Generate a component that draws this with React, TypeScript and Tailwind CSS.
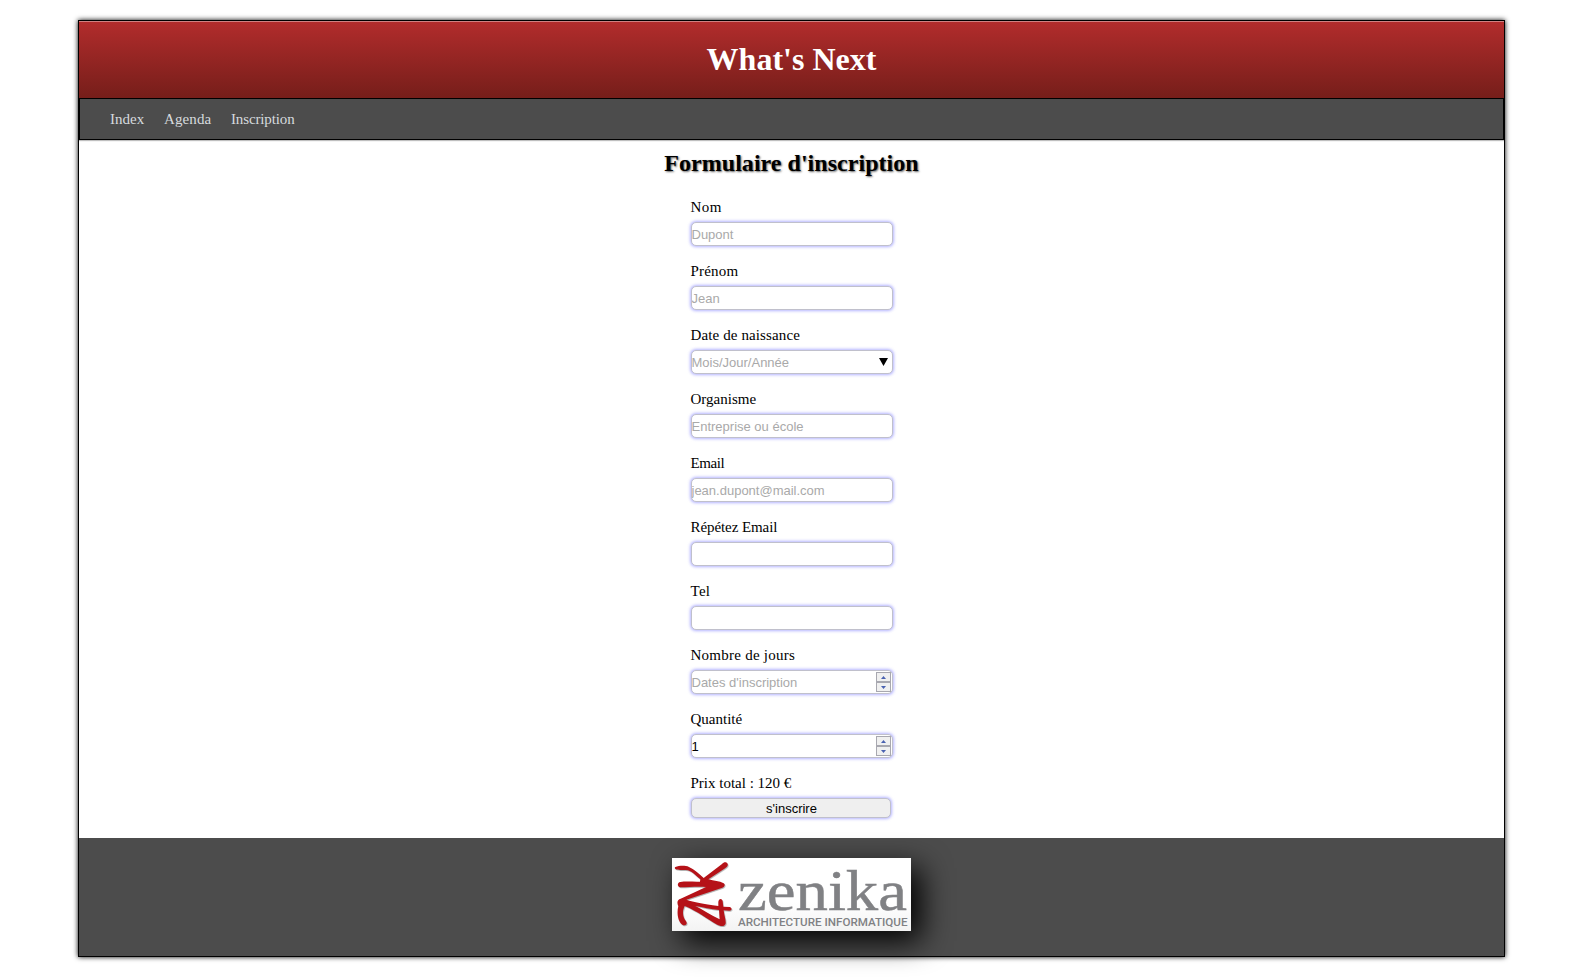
import type { ReactNode } from "react";

const glow = "border border-[#c0c0cc] shadow-[0_0_3px_1px_rgba(140,140,255,0.65)]";

function Label({ text, className }: { text: string; className: string }) {
  return (
    <label className={`block h-[22px] whitespace-nowrap text-[15px] leading-[22px] ${className}`}>{text}</label>
  );
}

function Field({
  label,
  spacing = "",
  hint = "",
  value,
  children,
}: {
  label: string;
  spacing?: string;
  hint?: string;
  value?: string;
  children?: ReactNode;
}) {
  return (
    <div className="h-16">
      <Label text={label} className={spacing} />
      <div className={`mt-1 flex h-6 w-[202px] items-center rounded-[5px] bg-white ${glow}`}>
        <input
          className="h-full min-w-0 flex-1 bg-transparent font-['Liberation_Sans',sans-serif] text-[13px] text-black outline-none placeholder:text-[#a9a9a9]"
          placeholder={hint}
          defaultValue={value}
        />
        {children}
      </div>
    </div>
  );
}

function Spinner() {
  return (
    <span className="mr-px flex h-5 w-[15px] flex-col border border-[#a8a8b0] bg-[#f0f0f0]">
      <span className="flex flex-1 items-center justify-center border-b border-[#a8a8b0]">
        <svg width="5" height="3"><path d="M2.5 0 5 3H0z" fill="#4a62b0" /></svg>
      </span>
      <span className="flex flex-1 items-center justify-center border-t border-[#a8a8b0]">
        <svg width="5" height="3"><path d="M0 0h5L2.5 3z" fill="#4a62b0" /></svg>
      </span>
    </span>
  );
}

function Logo() {
  return (
    <svg
      width="239"
      height="73"
      viewBox="0 0 239 73"
      className="block overflow-visible bg-linear-to-b from-white from-60% to-[#f3f3f3] shadow-[10px_10px_30px_#000]"
    >
      <g transform="translate(-2 -2) scale(.33333)" fill="#b51218" className="drop-shadow-[2px_3px_2px_rgba(0,0,0,0.3)]">
        <path d="M16 33C28 29 45 28 57 33C74 40 88 54 101 66L156 24C162 17 171 18 173 24C175 30 169 35 162 39L115 70C132 75 148 75 161 82C167 86 164 93 155 96L49 131C73 139 98 143 145 150L145 138C146 127 156 126 158 136L160 152L180 153C187 156 186 164 178 164L161 163C162 176 170 198 166 205C161 214 149 210 139 205C113 190 83 166 44 150C36 166 38 182 47 194C55 203 46 212 37 206C23 196 20 169 25 151C20 138 22 131 32 128L108 93C83 90 56 94 31 94C21 92 21 79 31 78C50 75 71 78 90 77L91 70C76 58 65 43 47 42C35 41 24 43 18 40C14 38 13 35 16 33ZM76 150C99 161 122 178 149 190L147 162C122 160 99 154 76 150Z" fillRule="evenodd" />
      </g>
      <text x="66" y="51.5" textLength="169" lengthAdjust="spacingAndGlyphs" className="fill-[#808184] font-['Liberation_Serif',serif] text-[58px]" stroke="#808184" strokeWidth=".5">
        zenika
      </text>
      <text x="66" y="67.5" textLength="169.5" lengthAdjust="spacingAndGlyphs" className="fill-[#808184] font-[Roboto,sans-serif] text-[11.7px] font-medium">
        ARCHITECTURE INFORMATIQUE
      </text>
    </svg>
  );
}

export default function App() {
  return (
    <div className="flex h-[977px] flex-col bg-white pt-5 pl-[78px] font-['Liberation_Serif',serif] text-black">
      <div className="flex h-[937px] w-[1427px] flex-col border border-black shadow-[0_0_5px_#000]">
        <header className="flex h-[77px] items-center justify-center border-t border-[#d08080] bg-linear-to-b from-[#b22c2c] to-[#761e1a] pb-0.5">
          <h1 className="text-[32px] leading-9 font-bold text-white">What's Next</h1>
        </header>
        <nav className="flex h-[42px] items-center border border-black bg-[#4c4c4c] pl-[30px] text-[15px] text-[#d6dade] shadow-[0_1px_1px_rgba(0,0,0,0.25)]">
          <a className="w-[54px]">Index</a>
          <a className="w-[67px] tracking-[0.1px]">Agenda</a>
          <a className="tracking-[-0.13px]">Inscription</a>
        </nav>
        <main className="flex flex-1 flex-col items-center">
          <h2 className="mt-2 h-[30px] text-2xl leading-[30px] font-bold tracking-[0.03px] [text-shadow:1px_1px_2px_#666]">Formulaire d'inscription</h2>
          <form className="mt-[18px] w-[202px]">
            <Field label="Nom" spacing="tracking-[0.4px]" hint="Dupont" />
            <Field label="Prénom" spacing="tracking-[0.2px]" hint="Jean" />
            <Field label="Date de naissance" spacing="tracking-[0.12px]" hint="Mois/Jour/Année">
              <svg width="9" height="8" className="mr-1"><path d="M0 0h9L4.5 8z" /></svg>
            </Field>
            <Field label="Organisme" hint="Entreprise ou école" />
            <Field label="Email" spacing="tracking-[-0.4px]" hint="jean.dupont@mail.com" />
            <Field label="Répétez Email" spacing="tracking-[-0.08px]" />
            <Field label="Tel" spacing="tracking-[0.3px]" />
            <Field label="Nombre de jours" spacing="tracking-[0.25px]" hint="Dates d'inscription"><Spinner /></Field>
            <Field label="Quantité" value="1"><Spinner /></Field>
            <Label text="Prix total : 120 €" className="" />
            <button type="button" className={`mt-1 block h-5 w-[200px] rounded-[5px] bg-[#efefef] pt-0.5 pl-0.5 font-['Liberation_Sans',sans-serif] text-[13px] leading-4 ${glow}`}>
              s'inscrire
            </button>
          </form>
        </main>
        <footer className="flex h-[118px] justify-center bg-[#4c4c4c] pt-5">
          <div><Logo /></div>
        </footer>
      </div>
    </div>
  );
}
